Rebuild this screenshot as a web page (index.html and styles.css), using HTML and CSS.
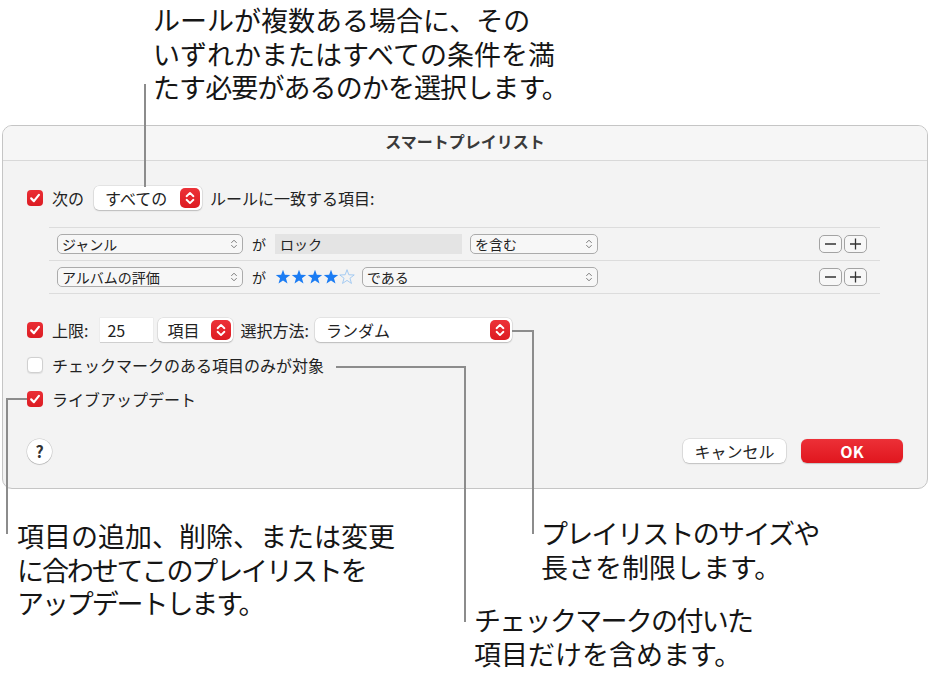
FILE: index.html
```html
<!DOCTYPE html>
<html lang="ja">
<head>
<meta charset="utf-8">
<title>スマートプレイリスト</title>
<link rel="stylesheet" href="styles.css">
</head>
<body>
<div class="page">
  <p class="note note-top">ルールが複数ある場合に、その<br>いずれかまたはすべての条件を満<br><span class="t0">たす必要があるのかを選択します。</span></p>

  <div class="dialog">
    <div class="titlebar">スマートプレイリスト</div>
    <div class="content">
      <div class="row">
        <span class="cb on"><svg viewBox="0 0 16 16"><path d="M4.2 8.4 L6.9 11.1 L11.9 4.9" /></svg></span>
        <span class="label gap-10">次の</span>
        <span class="popup-w pw-all"><span>すべての</span><span class="stepper"><svg viewBox="0 0 20 20"><path d="M6.6 8.2 L10 4.9 L13.4 8.2 M6.6 11.8 L10 15.1 L13.4 11.8" /></svg></span></span>
        <span class="label">ルールに一致する項目:</span>
      </div>

      <div class="rules">
        <div class="rule">
          <span class="popup pp-field">ジャンル<svg class="chev" viewBox="0 0 8 12"><path d="M1.6 4.6 L4 2.2 L6.4 4.6 M1.6 7.4 L4 9.8 L6.4 7.4" /></svg></span>
          <span class="ga">が</span>
          <span class="tfield">ロック</span>
          <span class="popup pp-op">を含む<svg class="chev" viewBox="0 0 8 12"><path d="M1.6 4.6 L4 2.2 L6.4 4.6 M1.6 7.4 L4 9.8 L6.4 7.4" /></svg></span>
          <span class="pm">
            <span class="pm-btn"><svg viewBox="0 0 21 16"><path d="M5 8 H16" /></svg></span>
            <span class="pm-btn"><svg viewBox="0 0 21 16"><path d="M5 8 H16 M10.5 2.5 V13.5" /></svg></span>
          </span>
        </div>
        <div class="rule">
          <span class="popup pp-field">アルバムの評価<svg class="chev" viewBox="0 0 8 12"><path d="M1.6 4.6 L4 2.2 L6.4 4.6 M1.6 7.4 L4 9.8 L6.4 7.4" /></svg></span>
          <span class="ga">が</span>
          <span class="stars"><svg viewBox="0 0 80 16">
            <defs><polygon id="star" points="8,0.7 9.82,5.79 15.23,5.95 10.95,9.26 12.47,14.45 8,11.4 3.53,14.45 5.05,9.26 0.77,5.95 6.18,5.79" /></defs>
            <use href="#star" class="s-on" />
            <use href="#star" class="s-on" x="16" />
            <use href="#star" class="s-on" x="32" />
            <use href="#star" class="s-on" x="48" />
            <use href="#star" class="s-off" x="64" />
          </svg></span>
          <span class="popup pp-op2">である<svg class="chev" viewBox="0 0 8 12"><path d="M1.6 4.6 L4 2.2 L6.4 4.6 M1.6 7.4 L4 9.8 L6.4 7.4" /></svg></span>
          <span class="pm">
            <span class="pm-btn"><svg viewBox="0 0 21 16"><path d="M5 8 H16" /></svg></span>
            <span class="pm-btn"><svg viewBox="0 0 21 16"><path d="M5 8 H16 M10.5 2.5 V13.5" /></svg></span>
          </span>
        </div>
      </div>

      <div class="row row-limit">
        <span class="cb on"><svg viewBox="0 0 16 16"><path d="M4.2 8.4 L6.9 11.1 L11.9 4.9" /></svg></span>
        <span class="label lb-limit">上限:</span>
        <span class="numfield">25</span>
        <span class="popup-w pw-unit"><span>項目</span><span class="stepper"><svg viewBox="0 0 20 20"><path d="M6.6 8.2 L10 4.9 L13.4 8.2 M6.6 11.8 L10 15.1 L13.4 11.8" /></svg></span></span>
        <span class="label lb-method">選択方法:</span>
        <span class="popup-w pw-random"><span>ランダム</span><span class="stepper"><svg viewBox="0 0 20 20"><path d="M6.6 8.2 L10 4.9 L13.4 8.2 M6.6 11.8 L10 15.1 L13.4 11.8" /></svg></span></span>
      </div>

      <div class="row row-check">
        <span class="cb off"></span>
        <span class="label">チェックマークのある項目のみが対象</span>
      </div>

      <div class="row row-live">
        <span class="cb on"><svg viewBox="0 0 16 16"><path d="M4.2 8.4 L6.9 11.1 L11.9 4.9" /></svg></span>
        <span class="label">ライブアップデート</span>
      </div>

      <div class="row row-buttons">
        <span class="help">?</span>
        <span class="btn btn-cancel">キャンセル</span>
        <span class="btn btn-ok">OK</span>
      </div>
    </div>
  </div>

  <p class="note note-live">項目の追加、削除、または変更<br><span class="t2">に合わせてこのプレイリストを</span><br><span class="t2">アップデートします。</span></p>
  <p class="note note-limit"><span class="t1">プレイリストのサイズや</span><br>長さを制限します。</p>
  <p class="note note-check"><span class="t1">チェックマークの付いた</span><br>項目だけを含めます。</p>

  <svg class="leaders" viewBox="0 0 931 676">
    <path d="M145 84 V187" />
    <path d="M512 331 H533 V534" />
    <path d="M336 367 H465 V622" />
    <path d="M7 534 V399 H27" />
  </svg>
</div>
</body>
</html>
```

FILE: styles.css
```css
* { box-sizing: border-box; }

html, body {
  margin: 0;
  background: #ffffff;
}

body {
  font-family: "Noto Sans CJK JP", "Noto Sans", sans-serif;
  color: #1d1d1f;
}

.page {
  position: relative;
  width: 931px;
  height: 676px;
  overflow: hidden;
}

/* ---------- callout notes ---------- */
.note {
  margin: 0;
  font-size: 27px;
  line-height: 33.5px;
  color: #151515;
  white-space: nowrap;
}

.note .t0 { letter-spacing: -0.9px; }
.note .t1 { letter-spacing: -1.7px; }
.note .t2 { letter-spacing: -2.1px; }

.note-top {
  padding: 3px 0 0 153px;
}

.note-live,
.note-limit,
.note-check {
  position: absolute;
}

.note-live { left: 17px; top: 519px; }
.note-limit { left: 541px; top: 516px; }
.note-check { left: 474px; top: 603px; }

.leaders {
  position: absolute;
  left: 0;
  top: 0;
  width: 931px;
  height: 676px;
  pointer-events: none;
}

.leaders path {
  fill: none;
  stroke: #8c8c8c;
  stroke-width: 2;
}

/* ---------- dialog ---------- */
.dialog {
  margin: 21px 0 0 2px;
  width: 926px;
  height: 364px;
  border: 1px solid #c5c5c5;
  border-radius: 10px;
  background: #f3f3f3;
  overflow: hidden;
}

.titlebar {
  height: 35px;
  border-bottom: 1px solid #d8d8d8;
  background: #f6f6f6;
  text-align: center;
  font-size: 16px;
  font-weight: 700;
  line-height: 31px;
  color: #3a3a3a;
}

.content {
  padding: 25px 0 0 24px;
}

.row {
  display: flex;
  align-items: center;
  height: 24px;
  font-size: 16px;
  color: #222;
}

.label {
  white-space: nowrap;
}

.gap-10 { margin-right: 10px; }

/* checkboxes */
.cb {
  flex: none;
  width: 16px;
  height: 16px;
  border-radius: 4px;
  margin-right: 9px;
  display: flex;
}

.cb svg {
  width: 16px;
  height: 16px;
}

.cb svg path {
  fill: none;
  stroke: #ffffff;
  stroke-width: 2.2;
  stroke-linecap: round;
  stroke-linejoin: round;
}

.cb.on {
  background: linear-gradient(#ea2e35, #dc1c23);
}

.cb.off {
  background: #ffffff;
  border: 1px solid #d0d0d0;
  box-shadow: 0 0.5px 1px rgba(0, 0, 0, 0.08);
}

/* white popups with red stepper */
.popup-w {
  flex: none;
  display: flex;
  align-items: center;
  justify-content: space-between;
  height: 24px;
  padding: 0 2px 0 11px;
  background: #ffffff;
  border-radius: 5px;
  box-shadow: 0 0 0 0.5px rgba(0, 0, 0, 0.12), 0 1px 1.5px rgba(0, 0, 0, 0.18);
  white-space: nowrap;
}

.pw-all { width: 108px; margin-right: 8px; }
.pw-unit { width: 75px; padding-left: 9px; margin-right: 7px; }
.pw-random { width: 197px; margin-left: 6px; }

.stepper {
  flex: none;
  width: 20px;
  height: 20px;
  border-radius: 5px;
  background: linear-gradient(#ec3238, #dd1b22);
  display: flex;
}

.stepper svg {
  width: 20px;
  height: 20px;
}

.stepper svg path {
  fill: none;
  stroke: #ffffff;
  stroke-width: 1.9;
  stroke-linecap: round;
  stroke-linejoin: round;
}

/* rules table */
.rules {
  margin: 17px 47px 0 22px;
  border-top: 1px solid #dcdcdc;
}

.rule {
  display: flex;
  align-items: center;
  height: 33px;
  border-bottom: 1px solid #dcdcdc;
  padding: 0 13px 0 8px;
  font-size: 14px;
  color: #222;
}

.popup {
  flex: none;
  display: flex;
  align-items: center;
  justify-content: space-between;
  height: 20px;
  padding: 0 4px 0 4px;
  border: 1px solid #ababab;
  border-radius: 5px;
  background: #f7f7f7;
  white-space: nowrap;
  line-height: 18px;
}

.pp-field { width: 186px; }
.pp-op { width: 128px; }
.pp-op2 { width: 236px; }

.chev {
  width: 8px;
  height: 12px;
}

.chev path {
  fill: none;
  stroke: #7a7a7a;
  stroke-width: 1;
  stroke-linecap: round;
  stroke-linejoin: round;
}

.ga {
  margin: 0 9px;
}

.tfield {
  flex: none;
  width: 187px;
  height: 20px;
  margin-right: 8px;
  padding-left: 5px;
  background: #e4e4e4;
  line-height: 20px;
}

.stars {
  flex: none;
  width: 80px;
  height: 16px;
  margin-right: 7px;
  display: flex;
}

.stars svg {
  width: 80px;
  height: 16px;
}

.s-on { fill: #1b7cf3; }
.s-off { fill: none; stroke: #9cc6f2; stroke-width: 0.9; }

.pm {
  margin-left: auto;
  display: flex;
  gap: 2px;
}

.pm-btn {
  width: 23px;
  height: 18px;
  border: 1px solid #a3a3a3;
  border-radius: 5px;
  background: #f7f7f7;
  display: flex;
}

.pm-btn svg {
  width: 21px;
  height: 16px;
}

.pm-btn svg path {
  fill: none;
  stroke: #333;
  stroke-width: 1.3;
}

/* limit row */
.row-limit {
  margin-top: 24px;
}

.lb-limit { margin-right: 12px; }
.lb-method { white-space: nowrap; }

.numfield {
  flex: none;
  width: 53px;
  height: 24px;
  padding-left: 7px;
  margin-right: 5px;
  background: #ffffff;
  line-height: 24px;
  box-shadow: 0 1px 0 rgba(0, 0, 0, 0.12), 0 0 0 0.5px rgba(0, 0, 0, 0.06);
}

.row-check { margin-top: 11px; }
.row-live { margin-top: 10px; }

/* bottom buttons */
.row-buttons {
  margin-top: 28px;
  height: 25px;
  padding-right: 24px;
}

.help {
  flex: none;
  width: 25px;
  height: 25px;
  border-radius: 50%;
  background: #ffffff;
  box-shadow: 0 0 0 0.5px rgba(0, 0, 0, 0.18), 0 1px 1px rgba(0, 0, 0, 0.12);
  font-size: 16px;
  font-weight: 700;
  color: #333;
  text-align: center;
  line-height: 25px;
}

.btn {
  flex: none;
  height: 24px;
  border-radius: 6px;
  text-align: center;
  line-height: 24px;
  font-size: 16px;
}

.btn-cancel {
  width: 103px;
  margin-left: auto;
  margin-right: 15px;
  background: #ffffff;
  color: #222;
  box-shadow: 0 0 0 0.5px rgba(0, 0, 0, 0.15), 0 1px 1.5px rgba(0, 0, 0, 0.15);
}

.btn-ok {
  width: 102px;
  background: linear-gradient(#ec3037, #e0161e);
  color: #ffffff;
  font-weight: 700;
  box-shadow: 0 0.5px 1px rgba(0, 0, 0, 0.2);
}
```
